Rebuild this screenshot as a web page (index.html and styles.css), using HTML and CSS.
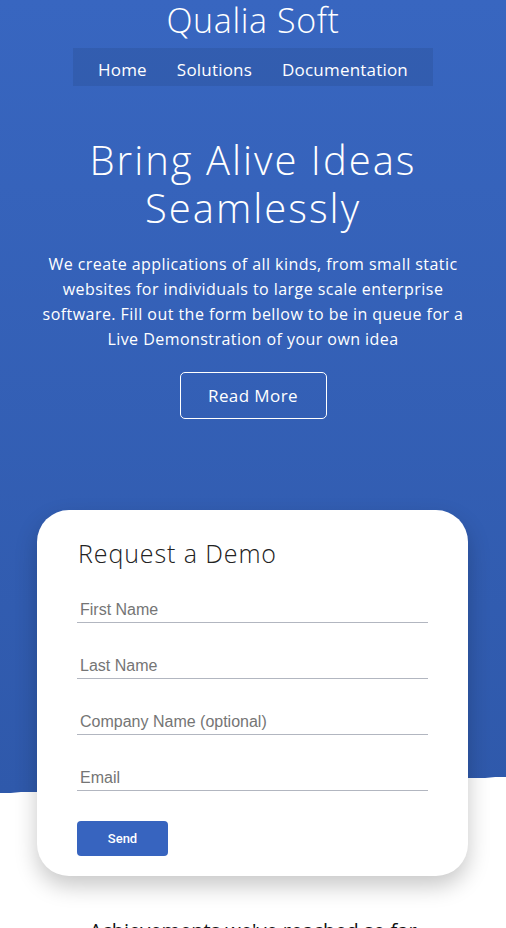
FILE: index.html
```html
<!DOCTYPE html>
<html lang="en">
<head>
<meta charset="utf-8">
<title>Qualia Soft</title>
<link rel="stylesheet" href="styles.css">
</head>
<body>
<div class="page">
  <header class="top">
    <h1 class="brand">Qualia Soft</h1>
    <nav class="nav">
      <a href="#">Home</a>
      <a href="#">Solutions</a>
      <a href="#">Documentation</a>
    </nav>
  </header>
  <section class="hero">
    <h2 class="hero-title">Bring Alive Ideas Seamlessly</h2>
    <p class="hero-text">We create applications of all kinds, from small static websites for individuals to large scale enterprise software. Fill out the form bellow to be in queue for a Live Demonstration of your own idea</p>
    <a class="btn-outline" href="#">Read More</a>
  </section>
  <section class="demo">
    <form class="card">
      <h3 class="card-title">Request a Demo</h3>
      <input class="field" type="text" placeholder="First Name">
      <input class="field" type="text" placeholder="Last Name">
      <input class="field" type="text" placeholder="Company Name (optional)">
      <input class="field" type="email" placeholder="Email">
      <button class="send" type="button">Send</button>
    </form>
  </section>
  <section class="achievements">
    <h2 class="ach-title">Achievements we've reached so far</h2>
  </section>
</div>
</body>
</html>
```

FILE: styles.css
```css
* { box-sizing: border-box; }
html, body { margin: 0; padding: 0; }
body {
  font-family: "Open Sans", "DejaVu Sans", sans-serif;
  color: #fff;
  background: #fff;
}
.page {
  background:
    linear-gradient(to bottom right, rgba(255,255,255,0) 49.5%, #fff 50.5%) 0 777px / 100% 16px no-repeat,
    linear-gradient(#3866c0, #2f59ab) 0 0 / 100% 793px no-repeat,
    #fff;
  overflow: hidden;
}
.top {
  display: flex;
  flex-direction: column;
  align-items: center;
}
.brand {
  margin: 0;
  font-size: 34px;
  line-height: 40px;
  font-weight: 300;
  letter-spacing: 0.6px;
}
.nav {
  margin-top: 8px;
  width: 360px;
  height: 38px;
  padding-top: 4px;
  display: flex;
  align-items: center;
  justify-content: center;
  gap: 30px;
  background: rgba(0, 0, 0, 0.08);
}
.nav a {
  color: #fff;
  text-decoration: none;
  font-size: 17px;
  letter-spacing: 0.2px;
}
.hero {
  display: flex;
  flex-direction: column;
  align-items: center;
  text-align: center;
  padding: 50px 20px 0;
}
.hero-title {
  margin: 0;
  font-size: 40px;
  line-height: 48px;
  font-weight: 300;
  letter-spacing: 2px;
  width: 360px;
}
.hero-text {
  margin: 20px 0 0;
  max-width: 432px;
  font-size: 16px;
  line-height: 25px;
  font-weight: 400;
  letter-spacing: 0.45px;
}
.btn-outline {
  margin-top: 20px;
  width: 147px;
  height: 47px;
  display: flex;
  align-items: center;
  justify-content: center;
  border: 1px solid #fff;
  border-radius: 5px;
  color: #fff;
  text-decoration: none;
  font-size: 17px;
  letter-spacing: 0.4px;
}
.demo {
  padding: 91px 38px 0 37px;
}
.card {
  background: #fff;
  border-radius: 32px;
  box-shadow: 0 10px 22px rgba(0, 0, 0, 0.22);
  padding: 28px 40px 20px;
  display: flex;
  flex-direction: column;
  align-items: flex-start;
}
.card-title {
  margin: 0 0 27px 1px;
  font-size: 25px;
  line-height: 30px;
  font-weight: 300;
  letter-spacing: 0.9px;
  color: #222;
}
.field {
  width: 100%;
  border: none;
  border-bottom: 1px solid #b2b6c0;
  padding: 6px 3px 3px;
  font-family: "Liberation Sans", Arial, sans-serif;
  font-size: 16px;
  line-height: 18px;
  color: #333;
  outline: none;
  margin-bottom: 28px;
  background: transparent;
}
.field::placeholder { color: #757575; }
.send {
  margin-top: 2px;
  width: 91px;
  height: 35px;
  border: none;
  border-radius: 4px;
  background: #3764bf;
  color: #fff;
  font-family: Roboto, "Liberation Sans", sans-serif;
  font-weight: 500;
  font-size: 13px;
}
.achievements {
  padding-top: 41px;
  text-align: center;
}
.ach-title {
  margin: 0;
  font-size: 20px;
  line-height: 27px;
  font-weight: 400;
  color: #111;
}
```
